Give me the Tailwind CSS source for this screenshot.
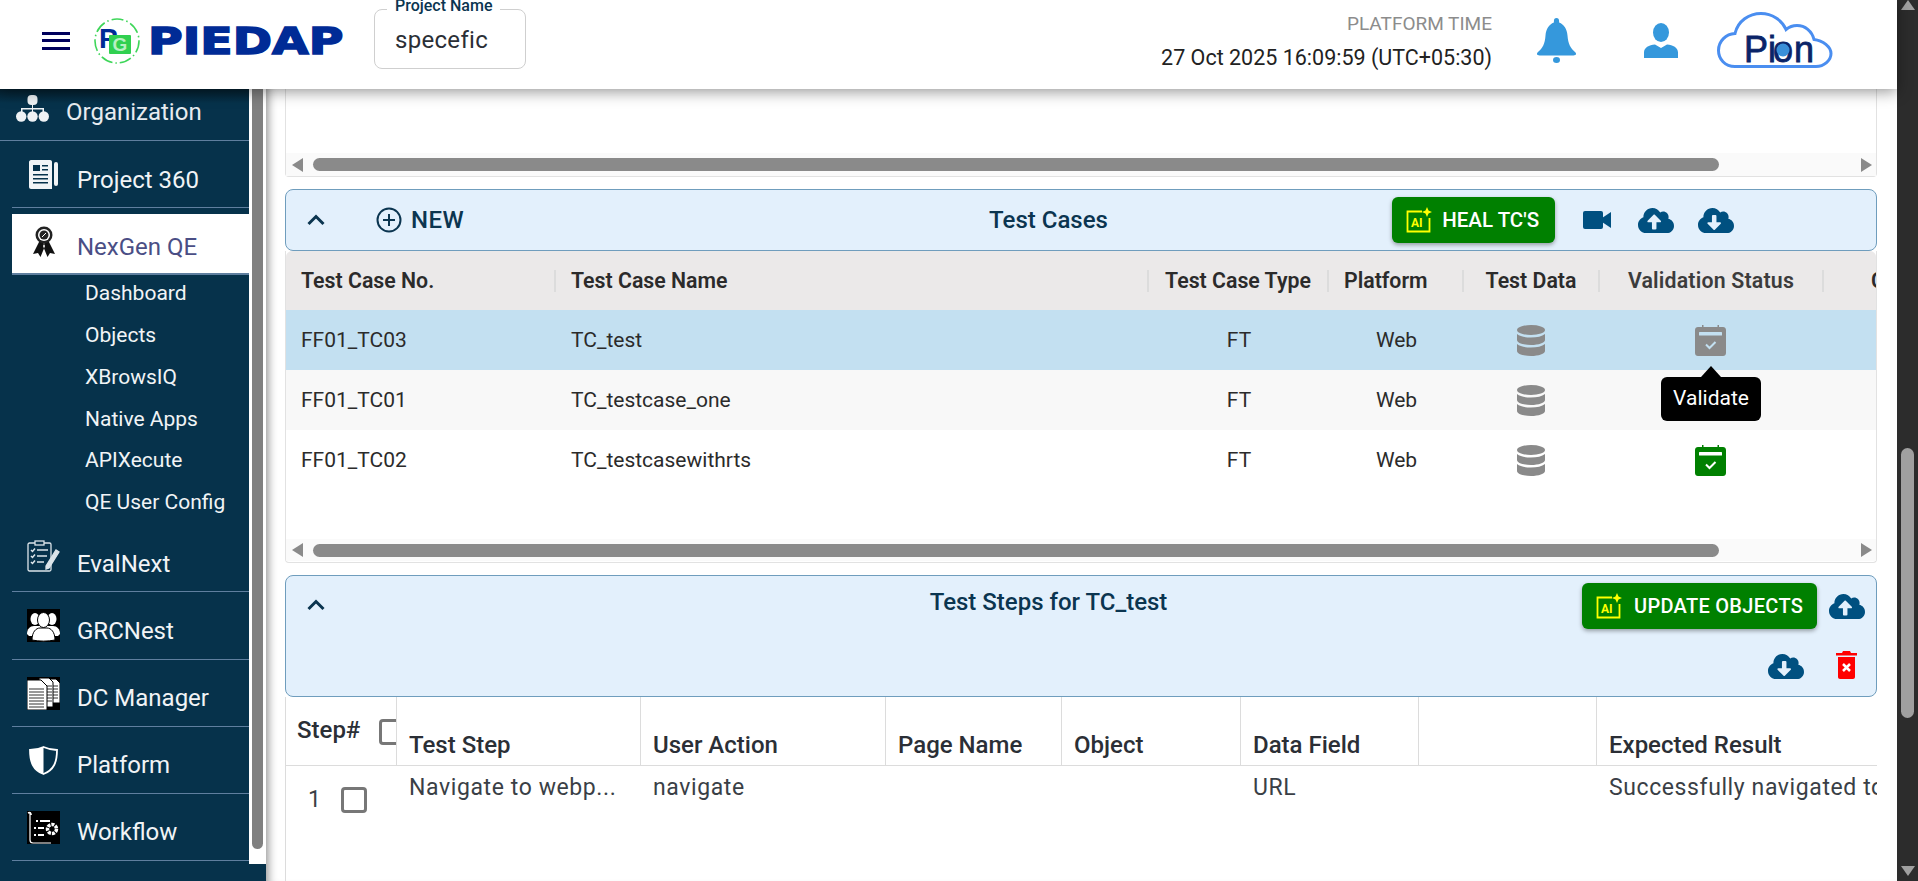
<!DOCTYPE html>
<html lang="en">
<head>
<meta charset="utf-8">
<title>PIEDAP</title>
<script src="https://cdn.jsdelivr.net/npm/@tailwindcss/browser@4"></script>
</head>
<body class="m-0 overflow-hidden font-['Roboto',sans-serif]">
<div class="flex h-[881px] w-[1918px] overflow-hidden bg-white">
  <div class="flex flex-col w-[1897px] h-full">
    <!-- header -->
    <header class="relative z-20 flex items-center h-[89px] shrink-0 bg-white shadow-[0_3px_14px_rgba(0,0,0,0.4)]">
      <div class="ml-[42px] w-[28px] h-[18px] mt-[-8px] flex flex-col justify-between">
        <span class="block h-[3px] bg-[#00005c]"></span><span class="block h-[3px] bg-[#00005c]"></span><span class="block h-[3px] bg-[#00005c]"></span>
      </div>
      <svg class="ml-[22px] mt-[-7px]" width="48" height="46" viewBox="0 0 48 46">
        <circle cx="25" cy="23" r="22" fill="none" stroke="#3fd65a" stroke-width="1.6" stroke-dasharray="12 3 1.5 3"/>
        <text x="7" y="30" font-family="Liberation Sans" font-weight="700" font-size="28" fill="#002b96">P</text>
        <rect x="17" y="17" width="22" height="19" rx="1" fill="#30d050"/>
        <text x="28" y="33" text-anchor="middle" font-family="Liberation Sans" font-weight="700" font-size="19" fill="#b8f0c4">G</text>
      </svg>
      <div class="ml-[8px] mt-[-7px] w-[191px] h-[30px] flex items-center text-[37px] font-bold font-['DejaVu_Sans',sans-serif] text-[#002b96] leading-none origin-left scale-x-[1.28] [-webkit-text-stroke:1.5px_#002b96]">PIEDAP</div>
      <div class="relative ml-[35px] mt-[-11px] w-[152px] h-[60px] rounded-lg border border-[#cfcfcf]">
        <span class="absolute left-[12px] top-[-13px] px-[8px] bg-white text-[16px] leading-[18px] font-medium text-[#0b3550] whitespace-nowrap">Project Name</span>
        <span class="absolute left-[20px] top-[16px] text-[24px] leading-[28px] tracking-[0.3px] text-[#2b2f36]">specefic</span>
      </div>
      <div class="ml-auto w-[340px] flex flex-col items-end mt-[-5px]">
        <span class="text-[19px] leading-[20px] text-[#8c8c8c]">PLATFORM TIME</span>
        <span class="mt-[12px] text-[21.5px] leading-[24px] text-[#222]">27 Oct 2025 16:09:59 (UTC+05:30)</span>
      </div>
      <svg class="ml-[45px] mt-[-8px]" width="39" height="45" viewBox="0 0 39 45" fill="#3598dc">
        <path d="M19.5 0c1.700 0 2.600 1.200 2.600 3v1.600C27 6.500 30 11 30.500 17.500c.5 8 3 13 7.500 16.500 2 2 1 3.500-1.500 3.500h-34c-2.500 0-3.500-1.500-1.500-3.500 4.500-3.500 7-8.500 7.500-16.500C9 11 12 6.500 16.900 4.600V3c0-1.800.9-3 2.600-3z"/>
        <ellipse cx="19.500" cy="42" rx="3.500" ry="3"/>
      </svg>
      <svg class="ml-[68px] mt-[-8px]" width="34" height="35" viewBox="0 0 34 35" fill="#3598dc">
        <ellipse cx="17" cy="9.500" rx="8" ry="9.500"/>
        <path d="M11 21.500l6 3.500 6-3.500c6 .5 11 3 11 8V35H0v-5.500c0-5 5-7.500 11-8z"/>
      </svg>
      <svg class="ml-[39px] mr-[64px] mt-[-9px]" width="116" height="56" viewBox="0 0 116 56">
        <path d="M22 54.500H18C8 54.500 1.500 47 1.500 38.500 1.500 29 9 22 18 21.500 21 9 32 1.500 44 1.500c11 0 21 6.500 25 16 3-2.500 7-4 11-4 8 0 15 5.500 17 14 9 1 17 7.500 17 14 0 7-7 13-15 13z" fill="none" stroke="#4a8ef0" stroke-width="3"/>
        <text x="27 51 56 77" y="50" font-family="Liberation Sans" font-size="36" fill="#0a2468" stroke="#0a2468" stroke-width=".8">Pion</text>
        <circle cx="66" cy="38" r="6.500" fill="#3a8fd8"/>
      </svg>
    </header>

    <div class="flex flex-1 min-h-0">
      <!-- sidebar -->
      <aside class="relative flex w-[266px] shrink-0 h-full bg-[#06324b] text-white">
        <div class="absolute left-0 top-0 w-[249px] h-[14px] bg-gradient-to-b from-[#04202f] to-transparent"></div>
        <nav class="w-[249px] shrink-0">
          <div class="relative flex items-center h-[52px] border-b border-[#5f7f9f] overflow-hidden">
            <svg class="ml-[16px] mt-[-13px] shrink-0" width="33" height="27" viewBox="0 0 33 27" fill="#eef2f5">
              <rect x="11.500" y="0" width="10" height="10" rx="4"/>
              <path d="M16 9h1v4h11v4h-1.500v-2.500h-9.500V17h-1v-2.500H6.500V17H5v-4h11z"/>
              <circle cx="5.200" cy="21.500" r="5.200"/><circle cx="16.500" cy="21.500" r="5.200"/><circle cx="27.800" cy="21.500" r="5.200"/>
            </svg>
            <span class="ml-[17px] text-[24px] leading-[28px] mt-[-5px] text-[#e6ecf0]">Organization</span>
          </div>
          <div class="flex items-center h-[67px] ml-[12px] border-b border-[#5f7f9f]">
            <span class="w-[65px] pl-[17px] shrink-0">
              <svg width="29" height="29" viewBox="0 0 29 29"><path d="M2 0h19c1.500 0 2 1 2 2v27H2c-1 0-2-1-2-2V2c0-1 1-2 2-2z" fill="#f1f4f6"/><rect x="25" y="2" width="4" height="24" rx="2" fill="#f1f4f6"/><g fill="#06324b"><rect x="4" y="5" width="7" height="6"/><rect x="13" y="5" width="6" height="1.500"/><rect x="13" y="9" width="6" height="1.500"/><rect x="4" y="14" width="15" height="1.500"/><rect x="4" y="18" width="15" height="1.500"/><rect x="4" y="22" width="15" height="1.500"/></g></svg>
            </span>
            <span class="text-[24px] leading-[28px] pt-[12px] text-[#f1f4f6]">Project 360</span>
          </div>
          <div class="flex items-center h-[61px] mt-[6px] ml-[12px] bg-white border-b-2 border-[#5f7f9f]">
            <span class="w-[65px] pl-[20px] shrink-0 mt-[-4px]">
              <svg width="24" height="31" viewBox="0 0 24 31"><path d="M9 12L1 28l5-1 2.500 4L13 20zM15 12l8 16-5-1-2.500 4L11 20z" fill="#111"/><circle cx="12" cy="9" r="8.500" fill="#222"/><circle cx="12" cy="9" r="6" fill="#fff"/><circle cx="12" cy="9" r="4.500" fill="#222"/><path d="M10 11l4-4" stroke="#fff" stroke-width="1"/></svg>
            </span>
            <span class="text-[24px] leading-[28px] pt-[6px] text-[#4a4e85]">NexGen QE</span>
          </div>
          <div class="flex flex-col pl-[85px] text-[21px] text-[#f1f4f6]">
            <span class="h-[42px] leading-[36px]">Dashboard</span>
            <span class="h-[42px] leading-[36px]">Objects</span>
            <span class="h-[42px] leading-[36px]">XBrowsIQ</span>
            <span class="h-[41px] leading-[36px]">Native Apps</span>
            <span class="h-[42px] leading-[36px]">APIXecute</span>
            <span class="h-[42px] leading-[36px]">QE User Config</span>
          </div>
          <div class="flex items-center h-[67px] mt-[-1px] ml-[12px] border-b border-[#5f7f9f]">
            <span class="w-[65px] pl-[15px] shrink-0 mt-[-4px]">
              <svg width="33" height="32" viewBox="0 0 33 32" fill="none" stroke="#dce5ea" stroke-width="1.300"><rect x="1" y="3" width="23" height="28" rx="1.500"/><rect x="8" y="1" width="9" height="4" fill="#06324b"/><path d="M4 10l1.500 1.500L8 8.500M4 16l1.500 1.500L8 14.500M4 22l1.500 1.500L8 20.500M10 10h11M10 16h10M10 22h7" stroke-width="1.500"/><path d="M19 26l10-16 3 2-10 16-3 1z" fill="#dce5ea"/></svg>
            </span>
            <span class="text-[24px] leading-[28px] pt-[12px] text-[#f1f4f6]">EvalNext</span>
          </div>
          <div class="flex items-center h-[68px] ml-[12px] border-b border-[#5f7f9f]">
            <span class="w-[65px] pl-[15px] shrink-0">
              <svg class="block" width="33" height="33" viewBox="0 0 33 33"><rect width="33" height="33" fill="#000"/><g fill="#fff"><ellipse cx="8" cy="10" rx="4.500" ry="6"/><ellipse cx="25" cy="10" rx="4.500" ry="6"/><path d="M0 25c0-5 3-8 7-8h19c4 0 7 3 7 8l-2 2H2z"/><ellipse cx="16.500" cy="11" rx="6" ry="7.500" stroke="#000"/><path d="M5 31c0-8 4-12 8-12h7c4 0 8 4 8 12-7 1.500-16 1.500-23 0z" stroke="#000"/></g></svg>
            </span>
            <span class="text-[24px] leading-[28px] pt-[10px] text-[#f1f4f6]">GRCNest</span>
          </div>
          <div class="flex items-center h-[67px] ml-[12px] border-b border-[#5f7f9f]">
            <span class="w-[65px] pl-[15px] shrink-0">
              <svg class="block" width="33" height="33" viewBox="0 0 33 33"><rect width="33" height="33" fill="#000"/><path d="M20 2h9l4 4v20H20z" fill="#fff" stroke="#000"/><path d="M24 9h7M24 12h7M24 15h7M24 18h7M24 21h7" stroke="#333"/><path d="M12 1h10l4 4v25H12z" fill="#fff" stroke="#000"/><path d="M20 9h5M20 12h5M20 15h5M20 18h5M20 21h5M20 24h5" stroke="#333"/><path d="M0 3h14l6 6v24H0z" fill="#fff" stroke="#000"/><path d="M2 12h15M2 15h15M2 18h15M2 21h15M2 24h15M2 27h15M2 30h15" stroke="#333" stroke-width="1.200"/></svg>
            </span>
            <span class="text-[24px] leading-[28px] pt-[10px] text-[#f1f4f6]">DC Manager</span>
          </div>
          <div class="flex items-center h-[67px] ml-[12px] border-b border-[#5f7f9f]">
            <span class="w-[65px] pl-[17px] shrink-0">
              <svg class="block" width="29" height="29" viewBox="0 0 29 29"><path d="M14.500 1C19 3 23 4 28 4c0 12-3 20-13.500 24C4 24 1 16 1 4c5 0 9.500-1 13.500-3z" fill="none" stroke="#fff" stroke-width="1.800"/><path d="M14.500 1C10 3 6 4 1 4c0 12 3 20 13.500 24z" fill="#fff"/></svg>
            </span>
            <span class="text-[24px] leading-[28px] pt-[10px] text-[#f1f4f6]">Platform</span>
          </div>
          <div class="flex items-center h-[67px] ml-[12px] border-b border-[#5f7f9f]">
            <span class="w-[65px] pl-[15px] shrink-0">
              <svg class="block" width="33" height="33" viewBox="0 0 33 33"><rect width="33" height="33" fill="#000"/><path d="M3 1v28c0 2 1 3 3 3h18" fill="none" stroke="#fff" stroke-width="1.200"/><path d="M1 2c2-1 3 0 3 2M9 10h2M13 10h10M7 17h2M11 17h6M7 24h2M11 24h6" fill="none" stroke="#fff" stroke-width="1.800"/><circle cx="25" cy="18" r="4.500" fill="none" stroke="#fff" stroke-width="3.500" stroke-dasharray="3 1"/></svg>
            </span>
            <span class="text-[24px] leading-[28px] pt-[10px] text-[#f1f4f6]">Workflow</span>
          </div>
        </nav>
        <div class="w-[17px] h-[775px] bg-white shrink-0 pl-[3px]">
          <div class="w-[11px] h-[760px] rounded-b-md bg-[#808080]"></div>
        </div>
      </aside>

      <!-- main -->
      <main class="relative flex flex-col flex-1 min-w-0 pl-[19px] pr-[20px] bg-white shadow-[inset_10px_0_10px_-8px_rgba(0,0,0,0.45)]">
        <!-- upper panel -->
        <section class="h-[88px] shrink-0 border-x border-b border-[#e2e2e2] rounded-b flex flex-col justify-end">
          <div class="flex items-center h-[23px] bg-[#fafafa]">
            <svg class="ml-[6px]" width="11" height="14" viewBox="0 0 11 14" fill="#8a8a8a"><path d="M11 0v14L0 7z"/></svg>
            <div class="ml-[10px] w-[1406px] h-[13px] rounded-full bg-[#8a8a8a]"></div>
            <svg class="ml-[142px]" width="11" height="14" viewBox="0 0 11 14" fill="#8a8a8a"><path d="M0 0v14l11-7z"/></svg>
          </div>
        </section>

        <!-- Test Cases bar -->
        <section class="relative flex items-center h-[62px] shrink-0 mt-[12px] rounded-lg border border-[#6f9dbd] bg-[#e3f0fc] text-[#0b3550]">
          <svg class="ml-[21px]" width="18" height="12" viewBox="0 0 18 12" fill="none" stroke="#0b3550" stroke-width="3"><path d="M1.500 10L9 2.500 16.500 10"/></svg>
          <svg class="ml-[51px]" width="26" height="26" viewBox="0 0 26 26" fill="none" stroke="#0b3550" stroke-width="2"><circle cx="13" cy="13" r="11.500"/><path d="M13 7v12M7 13h12"/></svg>
          <span class="ml-[9px] text-[24px] font-medium tracking-[0.5px]">NEW</span>
          <span class="absolute left-[645px] w-[235px] text-center text-[24px] font-medium">Test Cases</span>
          <div class="ml-[928px] flex items-center gap-[10px] h-[46px] w-[163px] shrink-0 rounded-md bg-[#008000] pl-[14px] shadow-[0_2px_4px_rgba(0,0,0,0.35)] text-white">
            <svg width="26" height="26" viewBox="0 0 26 26" fill="none"><path d="M16 4.500H1.500v20h22V11" stroke="#ffff00" stroke-width="1.800"/><text x="5" y="20" font-family="Roboto" font-weight="700" font-size="12" fill="#ffff00">AI</text><path d="M21 0l1.500 3.500L26 5l-3.500 1.500L21 10l-1.500-3.500L16 5l3.500-1.500z" fill="#ffff00"/></svg>
            <span class="text-[20.5px] font-medium whitespace-nowrap">HEAL TC'S</span>
          </div>
          <svg class="ml-[28px]" width="28" height="18" viewBox="0 0 28 18" fill="#005080"><rect width="20" height="18" rx="2"/><path d="M28 1v16l-9-6V7z"/></svg>
          <svg class="ml-[27px]" width="36" height="29" viewBox="0 0 640 512" fill="#005080"><path d="M537.6 226.6c4.1-10.7 6.4-22.4 6.4-34.6 0-53-43-96-96-96-19.7 0-38.1 6-53.3 16.2C367 64.2 315.3 32 256 32c-88.4 0-160 71.6-160 160 0 2.7.1 5.4.2 8.1C40.2 219.8 0 273.2 0 336c0 79.5 64.5 144 144 144h368c70.7 0 128-57.3 128-128 0-61.9-44-113.6-102.4-125.4zM393.4 288H328v112c0 8.8-7.2 16-16 16h-48c-8.8 0-16-7.2-16-16V288h-65.4c-14.3 0-21.4-17.2-11.3-27.3l105.4-105.4c6.2-6.2 16.4-6.2 22.6 0l105.4 105.4c10.1 10.1 2.9 27.3-11.3 27.3z"/></svg>
          <svg class="ml-[24px]" width="36" height="29" viewBox="0 0 640 512" fill="#005080"><path d="M537.6 226.6c4.1-10.7 6.4-22.4 6.4-34.6 0-53-43-96-96-96-19.7 0-38.1 6-53.3 16.2C367 64.2 315.3 32 256 32c-88.4 0-160 71.6-160 160 0 2.7.1 5.4.2 8.1C40.2 219.8 0 273.2 0 336c0 79.5 64.5 144 144 144h368c70.7 0 128-57.3 128-128 0-61.9-44-113.6-102.4-125.4zm-132.9 88.7L299.3 420.700c-6.2 6.2-16.4 6.2-22.6 0L171.300 315.300c-10.100-10.100-2.900-27.300 11.300-27.300H248V176c0-8.800 7.200-16 16-16h48c8.800 0 16 7.200 16 16v112h65.400c14.300 0 21.400 17.200 11.300 27.300z"/></svg>
        </section>

        <!-- Test Cases table -->
        <section class="relative h-[312px] shrink-0 border-x border-b border-[#e2e2e2] rounded-b text-[21px] text-[#2b2b2b]">
          <div class="grid grid-cols-[270px_593px_180px_135px_136px_224px_52px] items-center h-[59px] bg-[#ebe9e9] rounded-t-md font-semibold overflow-hidden whitespace-nowrap text-[21.3px]">
            <div class="flex items-center h-[22px] pl-[15px] border-r-2 border-[#dcdcdc]">Test Case No.</div>
            <div class="flex items-center h-[22px] pl-[15px] border-r-2 border-[#dcdcdc]">Test Case Name</div>
            <div class="flex items-center justify-center h-[22px] border-r-2 border-[#dcdcdc]">Test Case Type</div>
            <div class="flex items-center h-[22px] pl-[15px] border-r-2 border-[#dcdcdc]">Platform</div>
            <div class="flex items-center justify-center h-[22px] border-r-2 border-[#dcdcdc]">Test Data</div>
            <div class="flex items-center justify-center h-[22px] border-r-2 border-[#dcdcdc] tracking-[0.2px] text-[#3c3c3c]">Validation Status</div>
            <div class="pl-[47px] overflow-hidden w-[52px]">C</div>
          </div>
          <div class="grid grid-cols-[270px_593px_180px_135px_136px_224px_52px] items-center h-[60px] bg-[#c3e0f1]">
            <div class="pl-[15px] pt-[2px]">FF01_TC03</div><div class="pl-[15px] pt-[2px]">TC_test</div><div class="text-center pt-[2px]">FT</div><div class="text-center pt-[2px]">Web</div>
            <div class="flex justify-center pr-[2px]"><svg width="28" height="31" viewBox="0 0 28 31" fill="#8a8a8a"><ellipse cx="14" cy="5" rx="14" ry="5"/><path d="M0 9c3 2.500 8 3.500 14 3.500S25 11.500 28 9v6c0 2.800-6.300 5-14 5S0 17.800 0 15z"/><path d="M0 19c3 2.500 8 3.500 14 3.500S25 21.500 28 19v7c0 2.800-6.300 5-14 5S0 28.800 0 26z"/></svg></div>
            <div class="flex justify-center pr-[3px]"><svg width="31" height="31" viewBox="0 0 31 31"><path d="M7 0h1.500v2H22.500V0H24v2h4c1.700 0 3 1.300 3 3v23c0 1.700-1.300 3-3 3H3c-1.700 0-3-1.300-3-3V5c0-1.700 1.300-3 3-3h4z" fill="#8a8a8a"/><rect x="4" y="7" width="23" height="3.500" rx=".5" fill="#c3e0f1"/><path d="M11 19.500l3.500 3.500 6-6" fill="none" stroke="#c3e0f1" stroke-width="2"/></svg></div>
            <div></div>
          </div>
          <div class="grid grid-cols-[270px_593px_180px_135px_136px_224px_52px] items-center h-[60px] bg-[#f8f8f8]">
            <div class="pl-[15px] pt-[2px]">FF01_TC01</div><div class="pl-[15px] pt-[2px]">TC_testcase_one</div><div class="text-center pt-[2px]">FT</div><div class="text-center pt-[2px]">Web</div>
            <div class="flex justify-center pr-[2px]"><svg width="28" height="31" viewBox="0 0 28 31" fill="#8a8a8a"><ellipse cx="14" cy="5" rx="14" ry="5"/><path d="M0 9c3 2.500 8 3.500 14 3.500S25 11.500 28 9v6c0 2.800-6.300 5-14 5S0 17.800 0 15z"/><path d="M0 19c3 2.500 8 3.500 14 3.500S25 21.500 28 19v7c0 2.800-6.300 5-14 5S0 28.800 0 26z"/></svg></div>
            <div></div><div></div>
          </div>
          <div class="grid grid-cols-[270px_593px_180px_135px_136px_224px_52px] items-center h-[60px]">
            <div class="pl-[15px] pt-[2px]">FF01_TC02</div><div class="pl-[15px] pt-[2px]">TC_testcasewithrts</div><div class="text-center pt-[2px]">FT</div><div class="text-center pt-[2px]">Web</div>
            <div class="flex justify-center pr-[2px]"><svg width="28" height="31" viewBox="0 0 28 31" fill="#8a8a8a"><ellipse cx="14" cy="5" rx="14" ry="5"/><path d="M0 9c3 2.500 8 3.500 14 3.500S25 11.500 28 9v6c0 2.800-6.300 5-14 5S0 17.800 0 15z"/><path d="M0 19c3 2.500 8 3.500 14 3.500S25 21.500 28 19v7c0 2.800-6.300 5-14 5S0 28.800 0 26z"/></svg></div>
            <div class="flex justify-center pr-[3px]"><svg width="31" height="31" viewBox="0 0 31 31"><path d="M7 0h1.500v2H22.500V0H24v2h4c1.700 0 3 1.300 3 3v23c0 1.700-1.300 3-3 3H3c-1.700 0-3-1.300-3-3V5c0-1.700 1.300-3 3-3h4z" fill="#008000"/><rect x="4" y="7" width="23" height="3.500" rx=".5" fill="#fff"/><path d="M11 19.500l3.500 3.500 6-6" fill="none" stroke="#fff" stroke-width="2"/></svg></div>
            <div></div>
          </div>
          <div class="absolute left-0 right-0 bottom-[1px] flex items-center h-[22px] bg-[#fafafa]">
            <svg class="ml-[6px]" width="11" height="14" viewBox="0 0 11 14" fill="#8a8a8a"><path d="M11 0v14L0 7z"/></svg>
            <div class="ml-[10px] w-[1406px] h-[13px] rounded-full bg-[#8a8a8a]"></div>
            <svg class="ml-[142px]" width="11" height="14" viewBox="0 0 11 14" fill="#8a8a8a"><path d="M0 0v14l11-7z"/></svg>
          </div>
          <!-- tooltip -->
          <div class="absolute left-[1375px] top-[126px] w-[100px] h-[44px] rounded-md bg-black text-white flex items-center justify-center text-[21px]">Validate
            <span class="absolute left-[40px] top-[-11px] w-0 h-0 border-x-[10px] border-x-transparent border-b-[11px] border-b-black"></span>
          </div>
        </section>

        <!-- Test Steps bar -->
        <section class="relative h-[122px] shrink-0 mt-[12px] rounded-lg border border-[#6f9dbd] bg-[#e3f0fc] text-[#0b3550]">
          <svg class="absolute left-[21px] top-[23px]" width="18" height="12" viewBox="0 0 18 12" fill="none" stroke="#0b3550" stroke-width="3"><path d="M1.500 10L9 2.500 16.500 10"/></svg>
          <span class="absolute left-[400px] w-[725px] top-[12px] text-center text-[24px] leading-[28px] font-medium">Test Steps for TC_test</span>
          <div class="flex justify-end pr-[11px] pt-[7px] gap-[12px]">
            <div class="flex items-center gap-[12px] h-[46px] w-[235px] rounded-md bg-[#008000] pl-[14px] shadow-[0_2px_4px_rgba(0,0,0,0.35)] text-white">
              <svg width="26" height="26" viewBox="0 0 26 26" fill="none"><path d="M16 4.500H1.500v20h22V11" stroke="#ffff00" stroke-width="1.800"/><text x="5" y="20" font-family="Roboto" font-weight="700" font-size="12" fill="#ffff00">AI</text><path d="M21 0l1.500 3.500L26 5l-3.500 1.500L21 10l-1.500-3.500L16 5l3.500-1.500z" fill="#ffff00"/></svg>
              <span class="text-[20px] font-medium whitespace-nowrap tracking-[0.3px]">UPDATE OBJECTS</span>
            </div>
            <svg class="mt-[9px]" width="36" height="29" viewBox="0 0 640 512" fill="#005080"><path d="M537.6 226.6c4.1-10.7 6.4-22.4 6.4-34.6 0-53-43-96-96-96-19.7 0-38.1 6-53.3 16.2C367 64.2 315.3 32 256 32c-88.4 0-160 71.6-160 160 0 2.7.1 5.4.2 8.1C40.2 219.8 0 273.2 0 336c0 79.5 64.5 144 144 144h368c70.7 0 128-57.3 128-128 0-61.9-44-113.6-102.4-125.4zM393.4 288H328v112c0 8.8-7.2 16-16 16h-48c-8.8 0-16-7.2-16-16V288h-65.4c-14.3 0-21.4-17.2-11.3-27.3l105.4-105.4c6.2-6.2 16.4-6.2 22.6 0l105.4 105.4c10.1 10.1 2.9 27.3-11.3 27.3z"/></svg>
          </div>
          <div class="flex justify-end items-start pr-[19px] mt-[22px] gap-[32px]">
            <svg class="mt-[1px]" width="36" height="29" viewBox="0 0 640 512" fill="#005080"><path d="M537.6 226.6c4.1-10.7 6.4-22.4 6.4-34.6 0-53-43-96-96-96-19.7 0-38.1 6-53.3 16.2C367 64.2 315.3 32 256 32c-88.4 0-160 71.6-160 160 0 2.7.1 5.4.2 8.1C40.2 219.8 0 273.2 0 336c0 79.5 64.5 144 144 144h368c70.7 0 128-57.3 128-128 0-61.9-44-113.6-102.4-125.4zm-132.9 88.7L299.3 420.700c-6.2 6.2-16.4 6.2-22.6 0L171.300 315.300c-10.100-10.100-2.900-27.300 11.300-27.300H248V176c0-8.800 7.200-16 16-16h48c8.800 0 16 7.200 16 16v112h65.400c14.300 0 21.400 17.200 11.300 27.300z"/></svg>
            <svg width="21" height="28" viewBox="0 0 21 28"><path d="M7 0h7l1 2h6v2.500H0V2h6z" fill="#ff0000"/><path d="M2 6h17v20c0 1.100-.9 2-2 2H4c-1.100 0-2-.9-2-2z" fill="#ff0000"/><path d="M7 13l7 7M14 13l-7 7" stroke="#fff" stroke-width="2.500"/></svg>
          </div>
        </section>

        <!-- Test Steps table -->
        <section class="relative flex-1 border-l border-[#dcdcdc] text-[#2b2f36] text-[24px] overflow-hidden">
          <div class="grid grid-cols-[110px_244px_245px_176px_179px_178px_178px_281px] h-[69px] border-b border-[#dcdcdc] font-medium whitespace-nowrap">
            <div class="flex items-start pl-[11px] pt-[20px] leading-[26px] overflow-hidden">Step#<span class="ml-[19px] mt-[2px] w-[26px] h-[26px] shrink-0 rounded border-[3px] border-[#777]"></span></div>
            <div class="border-l border-[#dcdcdc] pl-[12px] pt-[35px] leading-[26px]">Test Step</div>
            <div class="border-l border-[#dcdcdc] pl-[12px] pt-[35px] leading-[26px]">User Action</div>
            <div class="border-l border-[#dcdcdc] pl-[12px] pt-[35px] leading-[26px]">Page Name</div>
            <div class="border-l border-[#dcdcdc] pl-[12px] pt-[35px] leading-[26px]">Object</div>
            <div class="border-l border-[#dcdcdc] pl-[12px] pt-[35px] leading-[26px]">Data Field</div>
            <div class="border-l border-[#dcdcdc]"></div>
            <div class="border-l border-[#dcdcdc] pl-[12px] pt-[35px] leading-[26px]">Expected Result</div>
          </div>
          <div class="grid grid-cols-[110px_244px_245px_176px_179px_178px_178px_281px] tracking-[0.6px] text-[#3a3f46] text-[23px] whitespace-nowrap">
            <div class="flex items-start pl-[22px] pt-[21px]"><span class="leading-[26px]">1</span><span class="ml-[19px] w-[26px] h-[26px] rounded border-[3px] border-[#777]"></span></div>
            <div class="pl-[13px] pt-[9px] leading-[26px]">Navigate to webp...</div>
            <div class="pl-[13px] pt-[9px] leading-[26px]">navigate</div>
            <div></div><div></div>
            <div class="pl-[13px] pt-[9px] leading-[26px]">URL</div>
            <div></div>
            <div class="pl-[13px] pt-[9px] leading-[26px] overflow-hidden">Successfully navigated to the page</div>
          </div>
        </section>
      </main>
    </div>
  </div>

  <!-- page scrollbar -->
  <div class="flex flex-col items-center w-[21px] h-full shrink-0 bg-[#2c2c2c]">
    <svg class="block" width="14" height="10" viewBox="0 0 14 10" fill="#a0a0a0"><path d="M7 0l7 10H0z"/></svg>
    <div class="w-[13px] h-[270px] mt-[438px] rounded-full bg-[#a0a0a0]"></div>
    <svg class="block mt-[148px]" width="14" height="10" viewBox="0 0 14 10" fill="#a0a0a0"><path d="M0 0h14L7 10z"/></svg>
  </div>
</div>
</body>
</html>
